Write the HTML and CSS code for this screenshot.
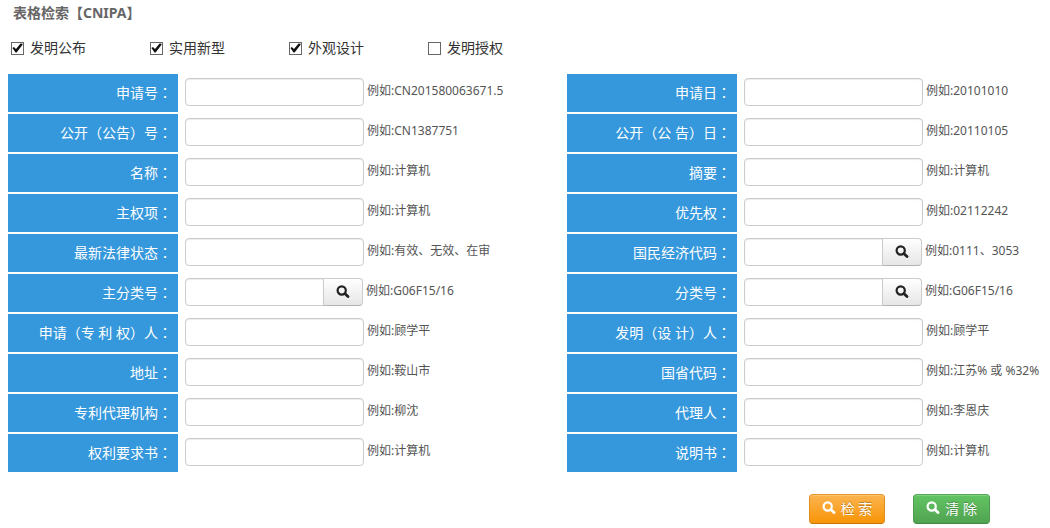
FILE: index.html
```html
<!DOCTYPE html>
<html lang="zh-CN">
<head>
<meta charset="utf-8">
<title>表格检索【CNIPA】</title>
<link rel="stylesheet" href="styles.css">
</head>
<body>
<svg class="symbols" aria-hidden="true">
  <symbol id="search" viewBox="0 0 14 14">
    <circle cx="5.7" cy="5.5" r="4.1" fill="none" stroke="currentColor" stroke-width="2.2"/>
    <path d="M8.8 8.6 12 11.6" fill="none" stroke="currentColor" stroke-width="2.8" stroke-linecap="round"/>
  </symbol>
</svg>
<form class="search-form">
  <h1 class="title">表格检索【CNIPA】</h1>
  <div class="types">
    <label class="type"><input class="check" type="checkbox" checked>发明公布</label>
    <label class="type"><input class="check" type="checkbox" checked>实用新型</label>
    <label class="type"><input class="check" type="checkbox" checked>外观设计</label>
    <label class="type"><input class="check" type="checkbox">发明授权</label>
  </div>
  <div class="fields">
    <div class="field"><label class="name" for="f1">申请号<span class="mark" lang="zh-TW">：</span></label><input class="text" id="f1" type="text"><span class="hint">例如:CN201580063671.5</span></div>
    <div class="field"><label class="name" for="f2">申请日<span class="mark" lang="zh-TW">：</span></label><input class="text" id="f2" type="text"><span class="hint">例如:20101010</span></div>
    <div class="field"><label class="name" for="f3">公开<span class="mark" lang="zh-TW">（</span>公告<span class="mark" lang="zh-TW">）</span>号<span class="mark" lang="zh-TW">：</span></label><input class="text" id="f3" type="text"><span class="hint">例如:CN1387751</span></div>
    <div class="field"><label class="name" for="f4">公开<span class="mark" lang="zh-TW">（</span>公 告<span class="mark" lang="zh-TW">）</span>日<span class="mark" lang="zh-TW">：</span></label><input class="text" id="f4" type="text"><span class="hint">例如:20110105</span></div>
    <div class="field"><label class="name" for="f5">名称<span class="mark" lang="zh-TW">：</span></label><input class="text" id="f5" type="text"><span class="hint">例如:计算机</span></div>
    <div class="field"><label class="name" for="f6">摘要<span class="mark" lang="zh-TW">：</span></label><input class="text" id="f6" type="text"><span class="hint">例如:计算机</span></div>
    <div class="field"><label class="name" for="f7">主权项<span class="mark" lang="zh-TW">：</span></label><input class="text" id="f7" type="text"><span class="hint">例如:计算机</span></div>
    <div class="field"><label class="name" for="f8">优先权<span class="mark" lang="zh-TW">：</span></label><input class="text" id="f8" type="text"><span class="hint">例如:02112242</span></div>
    <div class="field"><label class="name" for="f9">最新法律状态<span class="mark" lang="zh-TW">：</span></label><input class="text" id="f9" type="text"><span class="hint">例如:有效、无效、在审</span></div>
    <div class="field"><label class="name" for="f10">国民经济代码<span class="mark" lang="zh-TW">：</span></label><span class="group"><input class="text" id="f10" type="text"><button class="lookup" type="button" aria-label="查询国民经济代码"><svg class="icon"><use href="#search"/></svg></button></span><span class="hint">例如:0111、3053</span></div>
    <div class="field"><label class="name" for="f11">主分类号<span class="mark" lang="zh-TW">：</span></label><span class="group"><input class="text" id="f11" type="text"><button class="lookup" type="button" aria-label="查询主分类号"><svg class="icon"><use href="#search"/></svg></button></span><span class="hint">例如:G06F15/16</span></div>
    <div class="field"><label class="name" for="f12">分类号<span class="mark" lang="zh-TW">：</span></label><span class="group"><input class="text" id="f12" type="text"><button class="lookup" type="button" aria-label="查询分类号"><svg class="icon"><use href="#search"/></svg></button></span><span class="hint">例如:G06F15/16</span></div>
    <div class="field"><label class="name" for="f13">申请<span class="mark" lang="zh-TW">（</span>专 利 权<span class="mark" lang="zh-TW">）</span>人<span class="mark" lang="zh-TW">：</span></label><input class="text" id="f13" type="text"><span class="hint">例如:顾学平</span></div>
    <div class="field"><label class="name" for="f14">发明<span class="mark" lang="zh-TW">（</span>设 计<span class="mark" lang="zh-TW">）</span>人<span class="mark" lang="zh-TW">：</span></label><input class="text" id="f14" type="text"><span class="hint">例如:顾学平</span></div>
    <div class="field"><label class="name" for="f15">地址<span class="mark" lang="zh-TW">：</span></label><input class="text" id="f15" type="text"><span class="hint">例如:鞍山市</span></div>
    <div class="field"><label class="name" for="f16">国省代码<span class="mark" lang="zh-TW">：</span></label><input class="text" id="f16" type="text"><span class="hint">例如:江苏% 或 %32%</span></div>
    <div class="field"><label class="name" for="f17">专利代理机构<span class="mark" lang="zh-TW">：</span></label><input class="text" id="f17" type="text"><span class="hint">例如:柳沈</span></div>
    <div class="field"><label class="name" for="f18">代理人<span class="mark" lang="zh-TW">：</span></label><input class="text" id="f18" type="text"><span class="hint">例如:李恩庆</span></div>
    <div class="field"><label class="name" for="f19">权利要求书<span class="mark" lang="zh-TW">：</span></label><input class="text" id="f19" type="text"><span class="hint">例如:计算机</span></div>
    <div class="field"><label class="name" for="f20">说明书<span class="mark" lang="zh-TW">：</span></label><input class="text" id="f20" type="text"><span class="hint">例如:计算机</span></div>
  </div>
  <div class="actions">
    <button class="btn btn-search" type="submit"><svg class="icon"><use href="#search"/></svg><span>检 索</span></button>
    <button class="btn btn-clear" type="reset"><svg class="icon"><use href="#search"/></svg><span>清 除</span></button>
  </div>
</form>
</body>
</html>
```
FILE: styles.css
```css
* {
  box-sizing: border-box;
}

body {
  margin: 0;
  background: #fff;
  color: #333;
  font: 14px/20px "Noto Sans", "Noto Sans CJK SC", sans-serif;
}

button,
input {
  margin: 0;
  font: inherit;
}

.symbols {
  display: none;
}

.search-form {
  padding: 3px 8px 4px;
}

.title {
  margin: 0;
  padding-left: 5px;
  color: #666;
  font-size: 14px;
  font-weight: 700;
  line-height: 20px;
}

.types {
  display: flex;
  padding: 15px 0 16px 3px;
}

.type {
  display: flex;
  align-items: center;
  gap: 6px;
  width: 139px;
}

.check {
  appearance: none;
  display: grid;
  width: 13px;
  height: 13px;
  border: 1px solid #666;
  background: #fff;
}

.check:checked::before {
  content: "";
  background: #111;
  clip-path: polygon(4% 50%, 18% 42%, 36% 60%, 78% 10%, 96% 12%, 96% 20%, 42% 90%, 32% 90%);
}

.fields {
  display: grid;
  grid-template-columns: 559fr 475fr;
  row-gap: 2px;
}

.field {
  display: flex;
  align-items: flex-start;
  white-space: nowrap;
}

.name {
  width: 170px;
  margin-right: 7px;
  padding: 9px 6px 9px 0;
  background: #3598dc;
  color: #fff;
  text-align: right;
}

/* Centred full-width punctuation */
.mark {
  font-family: "Noto Sans CJK TC", sans-serif;
  line-height: 14px;
}

.text {
  width: 179px;
  height: 28px;
  margin-top: 4px;
  padding: 4px 6px;
  border: 1px solid #ccc;
  border-radius: 4px;
  background: #fff;
  box-shadow: inset 0 1px 1px rgba(0, 0, 0, 0.08);
}

.group {
  display: flex;
}

.group .text {
  width: 139px;
  border-radius: 4px 0 0 4px;
}

.lookup {
  display: flex;
  align-items: center;
  justify-content: center;
  width: 40px;
  height: 28px;
  margin: 4px 0 0 -1px;
  padding: 0;
  border: 1px solid #ccc;
  border-bottom-color: #b3b3b3;
  border-radius: 0 4px 4px 0;
  background: linear-gradient(#fff, #e6e6e6);
  color: #222;
}

.icon {
  width: 14px;
  height: 14px;
}

.hint {
  padding: 7px 0 0 3px;
  color: #555;
  font-size: 12px;
}

.actions {
  display: flex;
  justify-content: flex-end;
  gap: 28px;
  padding: 22px 52px 0 0;
}

.btn {
  display: flex;
  align-items: center;
  gap: 5px;
  height: 30px;
  padding: 0 12px;
  border: 1px solid;
  border-radius: 4px;
  color: #fff;
  text-shadow: 0 -1px 0 rgba(0, 0, 0, 0.25);
  box-shadow: inset 0 1px 0 rgba(255, 255, 255, 0.2);
}

.btn .icon {
  margin-bottom: 3px;
}

.btn-search {
  border-color: #e59728 #e08e1a #c67605;
  background: linear-gradient(#fbb450, #f89406);
}

.btn-clear {
  border-color: #57a957 #4e9c4e #428a42;
  background: linear-gradient(#62c462, #51a351);
}
```
